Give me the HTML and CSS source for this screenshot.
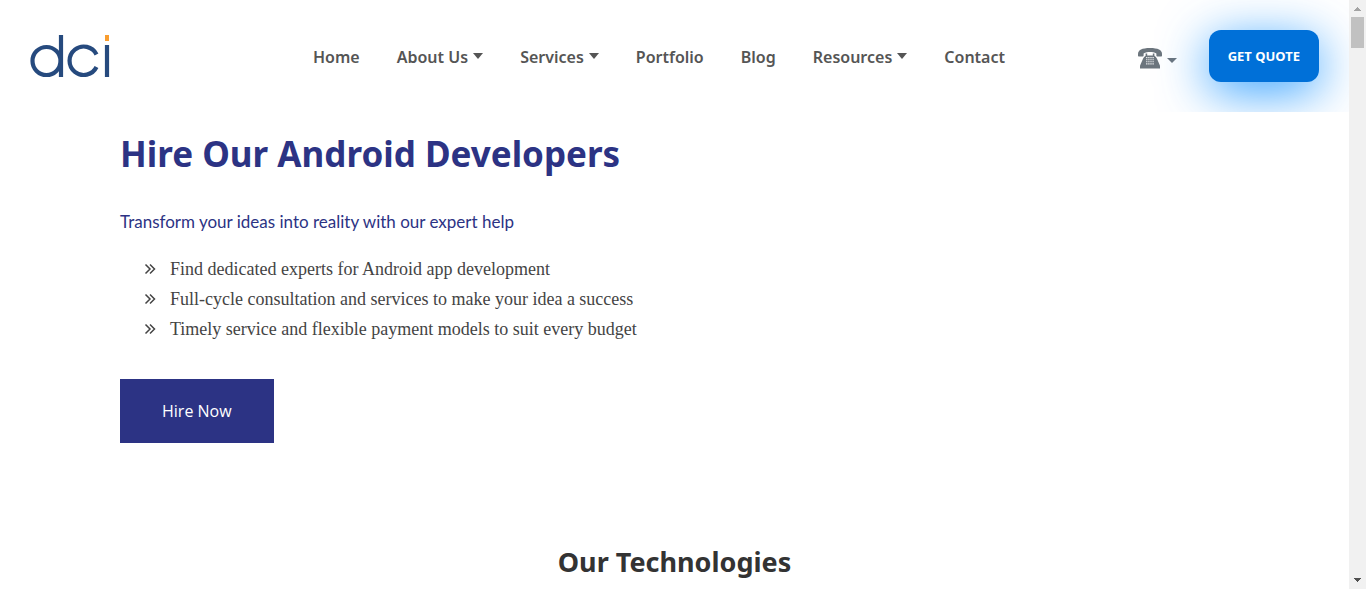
FILE: index.html
```html
<!DOCTYPE html>
<html lang="en">
<head>
<meta charset="utf-8">
<meta name="viewport" content="width=device-width, initial-scale=1">
<title>Hire Our Android Developers</title>
<link rel="stylesheet" href="styles.css">
</head>
<body>
<div class="window">
  <div class="page">
    <header class="header">
      <a class="logo" href="#" aria-label="dci">
        <svg width="80" height="44" viewBox="0 0 80 44">
          <g fill="none" stroke="#264a7e" stroke-width="4.200">
            <circle cx="16.500" cy="27" r="14"/>
            <path d="M31 1V43"/>
            <path d="M66.500 20.500A14.200 14.200 0 1 0 66.500 33"/>
            <path d="M77 11V43"/>
          </g>
          <path fill="#f99d2f" d="M75 1h4v6h-4z"/>
        </svg>
      </a>
      <nav class="nav">
        <a href="#">Home</a>
        <a class="drop" href="#">About Us</a>
        <a class="drop" href="#">Services</a>
        <a href="#">Portfolio</a>
        <a href="#">Blog</a>
        <a class="drop" href="#">Resources</a>
        <a href="#">Contact</a>
      </nav>
      <div class="actions">
        <button class="phone" type="button" aria-label="Phone numbers">
          <svg width="24" height="21" viewBox="0 0 24 21">
            <path fill="#6c757d" d="M0 6C0 2 4 0 12 0s12 2 12 6v1.500c0 .6-.4 1-1 1h-3.600c-.6 0-1-.4-1-1V5.600C16.500 4.400 14 4 12 4s-4.500.4-6.400 1.600v1.900c0 .6-.4 1-1 1H1c-.6 0-1-.4-1-1z"/>
            <path fill="#6c757d" d="M7.600 5.400h1.600v2h5.600v-2h1.600v2.400c1.200.8 2 1.800 2.600 3l2.600 6c.3.600.4 1 .4 1.600V20.500H2v-2.100c0-.6.100-1 .4-1.600l2.600-6c.6-1.200 1.400-2.200 2.600-3z"/>
            <path stroke="#fff" stroke-width="1.100" stroke-dasharray="1.200 .9" d="M8.200 9.600h8M8.200 11.700h8M8.200 13.800h8M8.200 15.900h8"/>
          </svg>
        </button>
        <a class="quote" href="#">GET QUOTE</a>
      </div>
    </header>
    <main>
      <section class="hero">
        <h1>Hire Our Android Developers</h1>
        <p>Transform your ideas into reality with our expert help</p>
        <ul>
          <li><svg class="mark" width="12" height="12" viewBox="0 0 12 12"><path d="M1.500 1.500L6 6l-4.500 4.500M6 1.500L10.500 6 6 10.500"/></svg>Find dedicated experts for Android app development</li>
          <li><svg class="mark" width="12" height="12" viewBox="0 0 12 12"><path d="M1.500 1.500L6 6l-4.500 4.500M6 1.500L10.500 6 6 10.500"/></svg>Full-cycle consultation and services to make your idea a success</li>
          <li><svg class="mark" width="12" height="12" viewBox="0 0 12 12"><path d="M1.500 1.500L6 6l-4.500 4.500M6 1.500L10.500 6 6 10.500"/></svg>Timely service and flexible payment models to suit every budget</li>
        </ul>
        <a class="hire" href="#">Hire Now</a>
      </section>
      <section class="tech"><h2>Our Technologies</h2></section>
    </main>
  </div>
  <div class="scroll" aria-hidden="true">
    <svg width="17" height="17" viewBox="0 0 17 17"><path fill="#a3a3a3" d="M8 7h1v1h1v1h1v1h1v1H5v-1h1V9h1V8h1z"/></svg>
    <div class="thumb"></div>
    <svg width="17" height="17" viewBox="0 0 17 17"><path fill="#505050" d="M5 6h7v1h-1v1h-1v1H9v1H8V9H7V8H6V7H5z"/></svg>
  </div>
</div>
</body>
</html>
```
FILE: styles.css
```css
* { box-sizing: border-box; }
body {
  margin: 0;
  background: #fff;
  color: #333;
  font-family: "Noto Sans", sans-serif;
  font-size: 16px;
}
a { color: inherit; text-decoration: none; }
.window { display: flex; height: 100vh; overflow: hidden; }
.page { flex: 1; min-width: 0; overflow: hidden; }
.header {
  display: flex;
  align-items: center;
  height: 112px;
  padding: 0 30px;
  overflow: hidden;
}
.logo { display: flex; }
.nav {
  display: flex;
  flex: 0 1 692px;
  justify-content: space-between;
  margin-left: 203px;
  padding-top: 2px;
  color: #555;
  font-weight: 600;
  line-height: 24px;
  white-space: nowrap;
}
.drop, .phone { display: flex; align-items: center; gap: 5px; }
.drop::after, .phone::after {
  content: "";
  border: 5px solid transparent;
  border-top-color: currentColor;
  border-bottom: 0;
}
.drop::after { border-top-width: 6px; margin-bottom: 2px; }
.actions { display: flex; align-items: center; gap: 32px; margin-left: auto; }
.phone { padding: 4px 0 0; border: 0; background: none; color: #6c757d; }
.phone::after { margin-top: 4px; }
.quote {
  padding: 14px 19px;
  border-radius: 12px;
  background: #0070d8;
  box-shadow: 0 10px 50px #0088ffcc;
  color: #fff;
  font-size: 13px;
  font-weight: 700;
  line-height: 24px;
  white-space: nowrap;
}
.hero { padding: 16px 120px 0; }
h1, p, ul, h2 { margin: 0; }
h1 { color: #2c3384; font-size: 35px; line-height: 52px; }
p {
  margin-top: 30px;
  color: #2c3384;
  font-family: Lato, sans-serif;
  font-size: 17px;
  line-height: 24px;
}
ul {
  margin-top: 20px;
  padding: 0 0 0 24px;
  list-style: none;
  color: #444;
  font-family: "Liberation Serif", serif;
  font-size: 18px;
  line-height: 30px;
}
li { display: flex; align-items: center; gap: 14px; }
.mark { fill: none; stroke: #444; stroke-width: 1.5; }
.hire {
  display: inline-block;
  margin-top: 35px;
  padding: 20px 42px;
  background: #2c3384;
  color: #fff;
  font-family: "Open Sans", sans-serif;
  font-weight: 500;
  line-height: 24px;
}
.tech { padding-top: 99px; text-align: center; }
h2 { font-size: 27px; line-height: 40px; }
.scroll { display: flex; flex-direction: column; width: 17px; background: #f1f1f1; }
.scroll svg { flex: none; }
.thumb { width: 13px; height: 31px; margin: 0 2px auto; background: #c1c1c1; }
```
